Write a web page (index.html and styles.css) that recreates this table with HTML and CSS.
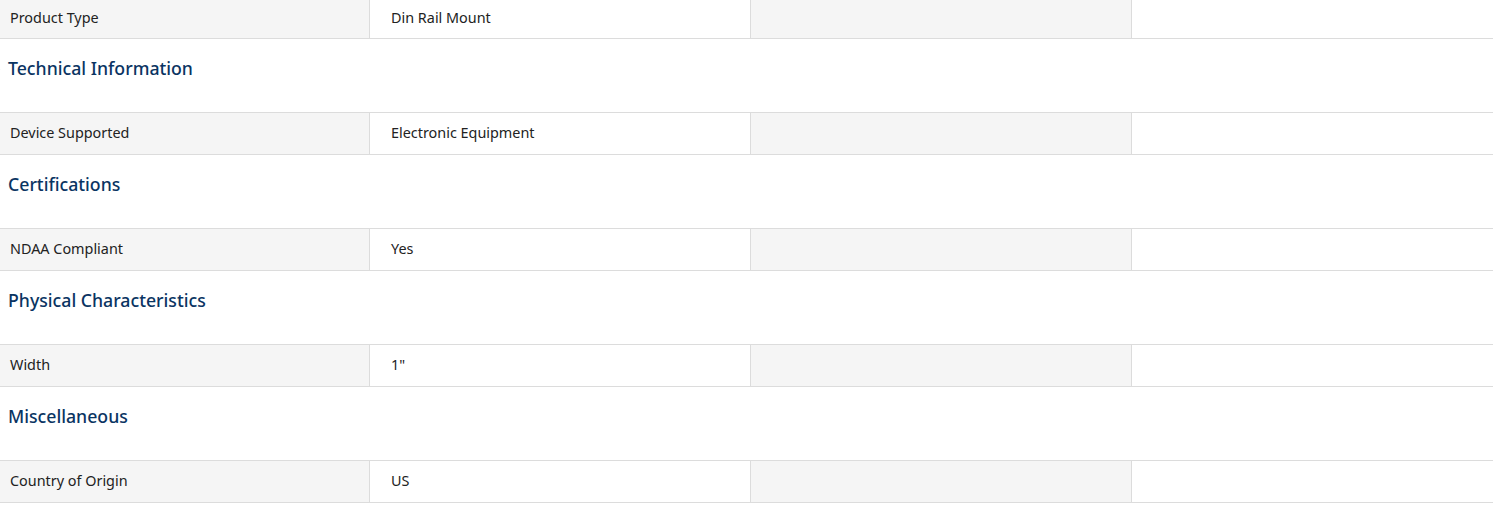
FILE: index.html
```html
<!DOCTYPE html>
<html>
<head>
<meta charset="utf-8">
<link rel="stylesheet" href="styles.css">
</head>
<body>
<div class="specs">
  <div class="row first"><div class="cell label">Product Type</div><div class="cell value">Din Rail Mount</div><div class="cell blank"></div><div class="cell empty"></div></div>
  <div class="section"><svg class="chev" width="10" height="10" viewBox="0 0 10 10"><path d="M2 2 L6 5 L2 8" fill="none" stroke="#0b3a66" stroke-width="1.4"/></svg><h2>Technical Information</h2></div>
  <div class="row"><div class="cell label">Device Supported</div><div class="cell value">Electronic Equipment</div><div class="cell blank"></div><div class="cell empty"></div></div>
  <div class="section"><svg class="chev" width="10" height="10" viewBox="0 0 10 10"><path d="M2 2 L6 5 L2 8" fill="none" stroke="#0b3a66" stroke-width="1.4"/></svg><h2>Certifications</h2></div>
  <div class="row"><div class="cell label">NDAA Compliant</div><div class="cell value">Yes</div><div class="cell blank"></div><div class="cell empty"></div></div>
  <div class="section"><svg class="chev" width="10" height="10" viewBox="0 0 10 10"><path d="M2 2 L6 5 L2 8" fill="none" stroke="#0b3a66" stroke-width="1.4"/></svg><h2>Physical Characteristics</h2></div>
  <div class="row"><div class="cell label">Width</div><div class="cell value">1"</div><div class="cell blank"></div><div class="cell empty"></div></div>
  <div class="section"><svg class="chev" width="10" height="10" viewBox="0 0 10 10"><path d="M2 2 L6 5 L2 8" fill="none" stroke="#0b3a66" stroke-width="1.4"/></svg><h2>Miscellaneous</h2></div>
  <div class="row"><div class="cell label">Country of Origin</div><div class="cell value">US</div><div class="cell blank"></div><div class="cell empty"></div></div>
</div>
</body>
</html>
```
FILE: styles.css
```css
html, body { margin: 0; padding: 0; background: #fff; overflow: hidden; }
body { font-family: "Noto Sans", "Lato", sans-serif; color: #222; }
.specs { margin-left: -12px; width: 1505px; }
.row { display: grid; grid-template-columns: 381px 381px 381px 1fr; border-bottom: 1px solid #dcdcdc; height: 41px; }
.row:not(.first) { border-top: 1px solid #dcdcdc; }
.row.first { height: 38px; }
.row.first .cell { padding-bottom: 4px; }
.cell { display: flex; align-items: center; padding: 0 21px 3px; font-size: 14.4px; box-sizing: border-box; }
.label { background: #f5f5f5; padding-left: 22px; }
.value { background: #fff; border-left: 1px solid #dcdcdc; }
.blank { background: #f5f5f5; border-left: 1px solid #dcdcdc; }
.empty { background: #fff; border-left: 1px solid #dcdcdc; }
.section { height: 73px; display: flex; align-items: flex-start; padding-top: 17px; box-sizing: border-box; position: relative; }
.chev { position: absolute; left: 5px; top: 25px; }
.section h2 { margin: 0 0 0 20px; font-size: 17.7px; font-weight: 500; color: #0a3462; line-height: 24px; }
```
